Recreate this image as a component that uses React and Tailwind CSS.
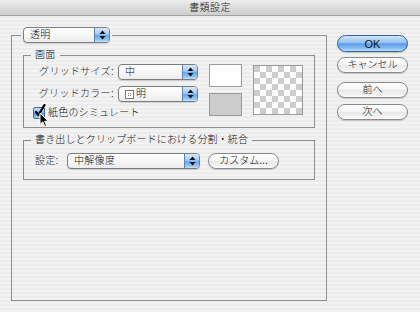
import React from "react";

const FONT = "font-['Liberation_Sans','Noto_Sans_CJK_JP',sans-serif]";

function Arrows() {
  return (
    <svg width="7" height="10" viewBox="0 0 7 10" className="block">
      <path d="M3.5 0.5 L6.5 4 L0.5 4 Z" fill="#111" />
      <path d="M0.5 6 L6.5 6 L3.5 9.5 Z" fill="#111" />
    </svg>
  );
}

function Popup({ width, children }) {
  return (
    <div
      className="flex h-[16px] rounded-[4px] border border-[#7d7d7d] shadow-[0_1px_1px_rgba(0,0,0,0.15)] overflow-hidden bg-[linear-gradient(to_bottom,#ffffff_0%,#f7f7f7_50%,#ececec_100%)]"
      style={{ width }}
    >
      <div className="flex-1 flex items-center pl-[6px] text-[10px] leading-[14px] text-[#111] tracking-[0.3px]">
        {children}
      </div>
      <div className="w-[15px] flex items-center justify-center border-l border-[#5d82b8] bg-[linear-gradient(to_bottom,#d6e8fc_0%,#a4c9f3_45%,#6ea7eb_52%,#8fc4f5_85%,#c8e7fd_100%)]">
        <Arrows />
      </div>
    </div>
  );
}

function AquaButton({ children, primary, className = "" }) {
  return (
    <div
      className={
        "h-[16px] w-[71px] rounded-full border flex items-center justify-center text-[10px] leading-[14px] text-[#111] shadow-[0_1px_1px_rgba(0,0,0,0.18)] " +
        (primary
          ? "border-[#35609c] bg-[linear-gradient(to_bottom,#cfe4fc_0%,#94c0f3_45%,#5e9ce9_52%,#7dbcf5_80%,#bfe4fd_100%)] "
          : "border-[#8a8a8a] bg-[linear-gradient(to_bottom,#ffffff_0%,#f7f7f7_45%,#e8e8e8_52%,#f3f3f3_85%,#ffffff_100%)] ") +
        className
      }
    >
      {children}
    </div>
  );
}

function Checker() {
  const cells = [];
  for (let r = 0; r < 8; r++) {
    for (let c = 0; c < 8; c++) {
      cells.push(
        <div
          key={r * 8 + c}
          className={(r + c) % 2 === 0 ? "bg-[#cdcdcd]" : "bg-white"}
        />
      );
    }
  }
  return (
    <div className="border border-[#9a9a9a] grid grid-cols-[repeat(8,6px)] grid-rows-[repeat(8,6px)] w-fit">
      {cells}
    </div>
  );
}

export default function App() {
  return (
    <div
      className={
        "relative w-[420px] h-[312px] overflow-hidden text-[#111] font-light " +
        FONT +
        " bg-[repeating-linear-gradient(to_bottom,#ececec_0px,#ececec_2px,#f3f3f3_2px,#f3f3f3_4px)]"
      }
    >
      {/* Title bar */}
      <div className="h-[16px] border-b border-[#a2a2a2] bg-[linear-gradient(to_bottom,#ededed_0%,#dcdcdc_50%,#cfcfcf_100%)] flex items-center justify-center text-[10px] leading-[15px] tracking-[0.4px] text-[#1a1a1a]">
        書類設定
      </div>

      <div className="flex">
        {/* Outer group */}
        <fieldset className="ml-[11px] mt-[11px] w-[316px] h-[274px] border border-[#8e8e8e] pl-[9px] pr-0 pb-0">
          <legend className="px-[2px]">
            <Popup width={87}>透明</Popup>
          </legend>

          {/* 画面 group */}
          <fieldset className="ml-[2px] mt-[6px] w-[292px] h-[79px] border border-[#8e8e8e] pl-[7px]">
            <legend className="px-[4px] text-[10px] leading-[12px] tracking-[0.3px]">画面</legend>
            <div className="flex">
              <div className="w-[167px] pt-[3px] flex flex-col">
                <div className="flex items-center">
                  <div className="w-[87px] pr-[4px] text-right text-[10px] leading-[16px] tracking-[0.3px] text-[#2a2a2a]">
                    グリッドサイズ:
                  </div>
                  <Popup width={80}>中</Popup>
                </div>
                <div className="flex items-center mt-[6px]">
                  <div className="w-[87px] pr-[4px] text-right text-[10px] leading-[16px] tracking-[0.3px] text-[#2a2a2a]">
                    グリッドカラー:
                  </div>
                  <Popup width={80}>
                    <span className="inline-flex items-center justify-center w-[9px] h-[9px] border border-[#777] bg-white mr-[2px]">
                      <span className="w-[3px] h-[3px] border border-dotted border-[#888]" />
                    </span>
                    明
                  </Popup>
                </div>
                <div className="flex items-center mt-[5px] ml-[2px]">
                  <div className="relative w-[12px] h-[12px] rounded-[2px] border border-[#46699e] bg-[linear-gradient(to_bottom,#c9e0fb_0%,#8ebcf1_45%,#5a99e8_55%,#a3d2fa_100%)]">
                    <svg width="12" height="14" viewBox="0 0 12 14" className="absolute left-[0px] top-[-4px]">
                      <path d="M2 8 L4.5 11 L10.5 1" fill="none" stroke="#000" strokeWidth="2.2" strokeLinecap="round" strokeLinejoin="round" />
                    </svg>
                  </div>
                  <div className="ml-[3px] text-[10px] leading-[12px] tracking-[0.2px]">紙色のシミュレート</div>
                </div>
              </div>
              <div className="ml-[11px] mt-[3px] flex flex-col">
                <div className="w-[33px] h-[23px] border border-[#9a9a9a] bg-white" />
                <div className="w-[33px] h-[23px] border border-[#9a9a9a] bg-[#cccccc] mt-[6px]" />
              </div>
              <div className="ml-[11px] mt-[4px]">
                <Checker />
              </div>
            </div>
          </fieldset>

          {/* 書き出し group */}
          <fieldset className="ml-[2px] mt-[6px] w-[292px] h-[46px] border border-[#8e8e8e] pl-[7px]">
            <legend className="px-[4px] text-[10px] leading-[12px] tracking-[0.15px]">
              書き出しとクリップボードにおける分割・統合
            </legend>
            <div className="flex items-center pt-[7px]">
              <div className="ml-[4px] w-[32px] text-[10px] leading-[16px] tracking-[0.3px] text-[#2a2a2a]">設定:</div>
              <Popup width={133}>中解像度</Popup>
              <AquaButton className="ml-[8px]">カスタム...</AquaButton>
            </div>
          </fieldset>
        </fieldset>

        {/* Buttons */}
        <div className="ml-[10px] mt-[19px] flex flex-col">
          <AquaButton primary className="h-[17px] text-[11px] font-normal">OK</AquaButton>
          <AquaButton className="mt-[5px]">キャンセル</AquaButton>
          <AquaButton className="mt-[9px]">前へ</AquaButton>
          <AquaButton className="mt-[6px]">次へ</AquaButton>
        </div>
      </div>

      {/* Mouse cursor */}
      <svg width="11" height="16" viewBox="0 0 11 16" className="absolute left-[39px] top-[112px]">
        <path d="M1 1 L1 12.5 L3.8 9.8 L5.8 14.5 L7.6 13.7 L5.6 9.2 L9.3 9.2 Z" fill="#000" stroke="#fff" strokeWidth="1" strokeLinejoin="round" />
      </svg>
    </div>
  );
}
